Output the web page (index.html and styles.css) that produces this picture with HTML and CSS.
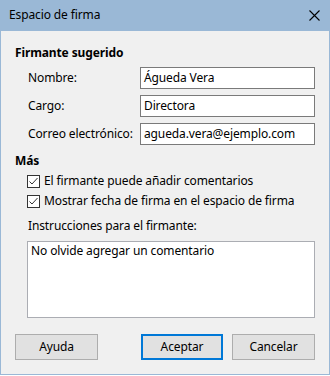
FILE: index.html
```html
<!DOCTYPE html>
<html lang="es">
<head>
<meta charset="utf-8">
<link rel="stylesheet" href="styles.css">
</head>
<body>
<div class="window">
  <div class="titlebar">
    <span class="title">Espacio de firma</span>
    <svg class="close" width="11" height="11" viewBox="0 0 11 11"><path d="M0.5 0.5L10.5 10.5M10.5 0.5L0.5 10.5" stroke="#000" stroke-width="1.1" fill="none"/></svg>
  </div>
  <div class="content">
    <div class="heading">Firmante sugerido</div>
    <div class="form">
      <label class="lbl">Nombre:</label><div class="input">Águeda Vera</div>
      <label class="lbl">Cargo:</label><div class="input">Directora</div>
      <label class="lbl">Correo electrónico:</label><div class="input">agueda.vera@ejemplo.com</div>
    </div>
    <div class="heading more">Más</div>
    <div class="check">
      <span class="box"><svg width="11" height="11" viewBox="0 0 11 11"><path d="M1.5 5.5L4 8L9.5 2" stroke="#333" stroke-width="1" fill="none"/></svg></span>
      <span>El firmante puede añadir comentarios</span>
    </div>
    <div class="check">
      <span class="box"><svg width="11" height="11" viewBox="0 0 11 11"><path d="M1.5 5.5L4 8L9.5 2" stroke="#333" stroke-width="1" fill="none"/></svg></span>
      <span>Mostrar fecha de firma en el espacio de firma</span>
    </div>
    <div class="instr-label">Instrucciones para el firmante:</div>
    <div class="textarea">No olvide agregar un comentario</div>
    <div class="buttons">
      <div class="btn">Ayuda</div>
      <div class="spacer"></div>
      <div class="btn default">Aceptar</div>
      <div class="btn">Cancelar</div>
    </div>
  </div>
</div>
</body>
</html>
```
FILE: styles.css
```css
html, body {
  margin: 0;
  padding: 0;
  background: #ffffff;
}
body {
  font-family: "Noto Sans", "Open Sans", sans-serif;
  font-size: 12px;
  letter-spacing: -0.12px;
  color: #000;
}
.window {
  width: 330px;
  height: 375px;
  box-sizing: border-box;
  border: 1px solid #9ab8d6;
  border-top: none;
  background: #f0f0f0;
  display: flex;
  flex-direction: column;
}
.titlebar {
  height: 31px;
  margin: 0 -1px;
  background: #9ab8d6;
  display: flex;
  align-items: center;
  justify-content: space-between;
  padding: 0 10px 0 9px;
  flex-shrink: 0;
}
.title {
  font-size: 12px;
  line-height: 16px;
  padding-bottom: 1px;
}
.close {
  display: block;
  margin-top: -1px;
}
.content {
  padding: 14px 14px 0 14px;
  display: flex;
  flex-direction: column;
}
.heading {
  font-weight: bold;
  line-height: 16px;
  height: 16px;
}
.form {
  margin-top: 6px;
  display: grid;
  grid-template-columns: 125px 175px;
  row-gap: 6px;
  align-items: center;
}
.lbl {
  padding-left: 13px;
  line-height: 16px;
}
.input {
  height: 22px;
  box-sizing: border-box;
  border: 1px solid #7a7a7a;
  background: #fff;
  padding: 0 3px;
  line-height: 20px;
  white-space: nowrap;
  overflow: hidden;
}
.more {
  margin-top: 8px;
}
.check {
  display: flex;
  align-items: center;
  height: 16px;
  line-height: 16px;
  padding-left: 12px;
  margin-top: 4px;
  gap: 4px;
}
.check + .check {
  margin-top: 4px;
}
.box {
  width: 13px;
  height: 13px;
  box-sizing: border-box;
  border: 1px solid #333;
  background: #fff;
  display: flex;
  align-items: center;
  justify-content: center;
  flex-shrink: 0;
}
.box svg {
  display: block;
}
.instr-label {
  margin-top: 9px;
  padding-left: 13px;
  line-height: 16px;
}
.textarea {
  margin-top: 7px;
  margin-left: 12px;
  width: 288px;
  height: 77px;
  box-sizing: border-box;
  border: 1px solid #abadb3;
  background: #fff;
  padding: 1px 3px;
  line-height: 16px;
}
.buttons {
  margin-top: 16px;
  display: flex;
  gap: 9px;
}
.spacer {
  width: 25px;
}
.btn {
  width: 83px;
  height: 26px;
  box-sizing: border-box;
  border: 1px solid #adadad;
  background: #e1e1e1;
  display: flex;
  align-items: center;
  justify-content: center;
  line-height: 16px;
}
.btn.default {
  width: 82px;
  border: 2px solid #0078d7;
}
```
